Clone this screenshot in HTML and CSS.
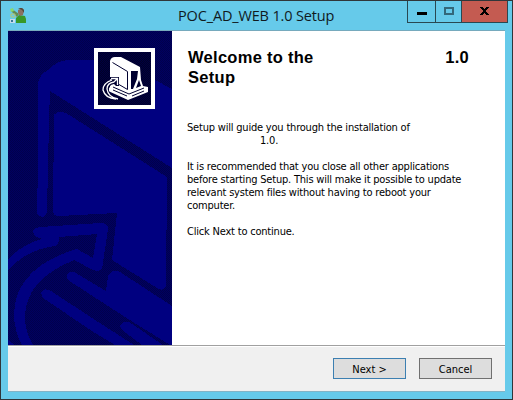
FILE: index.html
```html
<!DOCTYPE html>
<html lang="en">
<head>
<meta charset="utf-8">
<title>POC_AD_WEB 1.0 Setup</title>
<link rel="stylesheet" href="styles.css">
</head>
<body>
<div class="window">
  <header class="titlebar">
    <svg class="app-icon" width="18" height="17" viewBox="0 0 18 17">
      <path d="M7 16V11l3-3 6 1 1 3v4z" fill="#389828"/>
      <path d="M8 10L2 4l1-2 7 5z" fill="#628b52"/>
      <path d="M9 3l4-2 2 2-1 5-3 1-2-3z" fill="#8b7061"/>
      <path d="M9 1h4l2 2v3l-2-3z" fill="#54473d"/>
      <path d="M1 2l3-1 1 3-3 1z" fill="#8bd86c"/>
      <path d="M2 7h4v3H2z" fill="none" stroke="#b4c974"/>
      <path d="M1 12h5v4H1z" fill="#c5dcec"/>
      <path d="M2 13h2v2H2z" fill="#397899"/>
    </svg>
    <h1 class="caption">POC_AD_WEB 1.0 Setup</h1>
    <div class="controls">
      <button class="control minimize" aria-label="Minimize"><svg width="10" height="3"><path d="M0 0h10v3H0z"/></svg></button>
      <button class="control maximize" aria-label="Maximize"><svg width="10" height="8"><path d="M1 1h8v6H1z" fill="none" stroke="#33687a" stroke-width="2"/></svg></button>
      <button class="control close" aria-label="Close"><svg width="9" height="8" shape-rendering="crispEdges"><path d="M0 0h3v1h1v1h1V1h1V0h3v1H8v1H7v1H6v2h1v1h1v1h1v1H6V7H5V6H4v1H3v1H0V7h1V6h1V5h1V3H2V2H1V1H0z"/></svg></button>
    </div>
  </header>
  <main class="client">
    <section class="page">
      <div class="banner">
        <svg class="artwork" width="164" height="314" viewBox="8 31 164 314" fill="#000080" shape-rendering="crispEdges">
          <path d="M38 83Q40 74 48 70Q56 61 68 60H110L155 80L172 89V168L50 91L49 120L47 211Q46 217 42 217Q37 216 37 211L38 165Z"/>
          <path d="M54 115Q58 110 66 113L167 177L166 286Q163 292 157 288L112 260L117 213L59 216Q53 216 53 211Z"/>
          <path d="M33 232Q33 228 40 227L101 223Q108 223 108 229L102 269Q99 272 93 270L74 260Q25 280 25 317Q25 332 33 345H22Q14 331 14 313Q16 267 77 249L93 258L97 234L59 237Q60 243 55 246Q25 250 8 271V259Q23 244 42 239Q34 237 33 232Z"/>
          <path d="M67 277Q67 270 74 272L106 291L108 276Q113 268 120 272L172 306V345H170L125 317L68 280Z"/>
          <path d="M120 326Q122 321 129 322L163 345H142L122 330Z"/>
          <path d="M41 293Q43 287 51 291L92 318L134 345H115L92 331L43 298Z"/>
          <path d="M8 340l7 5H8z"/>
        </svg>
        <svg class="logo" width="53" height="53" viewBox="98 52 53 53">
          <path d="M110 61Q111 57 115 57H121L140 67L141 80L143 86L148 87V92L128 100L106 90L110 87Z" fill="#fff"/>
          <path d="M112.500 62.500L127.500 71.500V89.500L113 81" fill="none" stroke="#000030"/>
          <path d="M131 71h7l-1 8-4 10h-2z" fill="#000030"/>
          <path d="M139 80l2 6-5 2z" fill="#000030"/>
          <path d="M113 87l16 7 15-6M113 90l14 6M132 96l12-5" fill="none" stroke="#000030"/>
          <path d="M110 77h9v9h-3l-2-2q-6 1-5 7 1 5 9 8-9 1-13-4-3-7 2-12 3-4 6-4h-3z" fill="#000030"/>
          <path d="M111 78.500h6.500v6.500M117 79l-3 3q-7 1-7 7 1 8 11 10M112 80q-9 3-9 10 2 8 13 9" fill="none" stroke="#fff" stroke-width="1.3"/>
        </svg>
      </div>
      <div class="content">
        <h2 class="heading"><span>Welcome to the<br>Setup</span><span class="version">1.0</span></h2>
        <p class="text">Setup will guide you through the installation of<br><span class="product">1.0.</span></p>
        <p class="text">It is recommended that you close all other applications<br>before starting Setup. This will make it possible to update<br>relevant system files without having to reboot your<br>computer.</p>
        <p class="text">Click Next to continue.</p>
      </div>
    </section>
    <footer class="actions">
      <button class="button primary">Next &gt;</button>
      <button class="button">Cancel</button>
    </footer>
  </main>
</div>
</body>
</html>
```
FILE: styles.css
```css
* { box-sizing: border-box; }
body { margin: 0; }
.window {
  width: 513px;
  height: 400px;
  display: flex;
  flex-direction: column;
  padding: 0 7px 7px;
  border: 1px solid #30363a;
  background: #66caea;
}
.titlebar { height: 29px; display: flex; align-items: flex-start; }
.app-icon { margin: 6px 0 0 1px; }
.caption {
  flex: 1;
  margin: 4px 0 0 151px;
  font: 14.5px/21px "Open Sans", sans-serif;
  letter-spacing: -0.15px;
  white-space: nowrap;
  color: #101a1e;
}
.controls {
  display: flex;
  width: 101px;
  height: 22px;
  margin-right: -3px;
  border: 1px solid #294852;
  border-top: 0;
}
.control {
  display: flex;
  justify-content: center;
  padding: 6px 0 0;
  border: 0;
  border-right: 1px solid #294852;
  background: #66caea;
}
.minimize { width: 28px; padding-top: 11px; }
.maximize { width: 26px; }
.close { width: 45px; background: #c45b51; border-right: 0; }
.client { display: flex; flex-direction: column; height: 362px; border-top: 1px solid #76aabd; border-bottom: 1px solid #83b4c6; background: #f0f0f0; }
.page { display: flex; height: 314px; background: #fff; }
.banner {
  position: relative;
  flex: none;
  background: repeating-conic-gradient(#00004c 0 25%, #000060 0 50%) 0 0 / 2px 2px;
}
.artwork { display: block; }
.logo {
  position: absolute;
  left: 86px;
  top: 17px;
  box-sizing: content-box;
  border: 4px solid #fff;
  background: repeating-conic-gradient(#000028 0 25%, #000040 0 50%) 0 0 / 2px 2px;
}
.content { padding: 16px 0 0 15px; width: 333px; }
.heading {
  display: flex;
  justify-content: space-between;
  margin: 0 36px 34px 1px;
  font: bold 16.5px/20px "Liberation Sans", sans-serif;
  letter-spacing: 0.28px;
  color: #000;
}
.text {
  margin: 0 0 13px;
  font: 11px/13px "DejaVu Sans Condensed", "DejaVu Sans", sans-serif;
  font-stretch: condensed;
  letter-spacing: -0.2px;
  white-space: nowrap;
  color: #000;
}
.product { padding-left: 73px; }
.actions {
  flex: 1;
  display: flex;
  justify-content: flex-end;
  gap: 13px;
  padding: 12px 13px 0 0;
  border-top: 1px solid #a0a0a0;
  box-shadow: inset 0 1px #fff;
}
.button {
  width: 73px;
  height: 21px;
  padding: 2px 0 0;
  border: 1px solid #707070;
  background: #ddd;
  font: 11px/17px "DejaVu Sans Condensed", "DejaVu Sans", sans-serif;
  color: #000;
}
.primary { border-color: #3c7fb1; }
```
